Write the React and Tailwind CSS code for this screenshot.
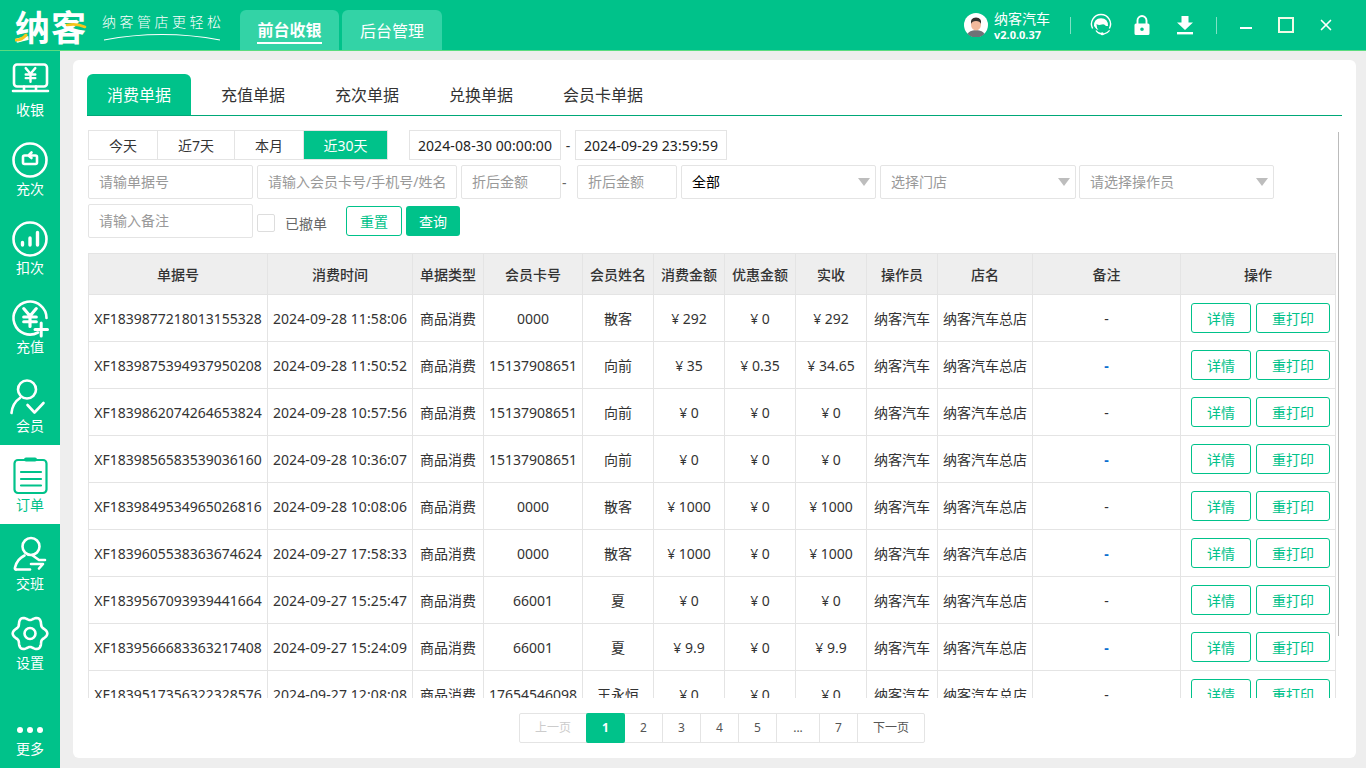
import React from "react";
import { X } from "lucide-react";

const FONT = "font-['Noto_Sans','Noto_Sans_CJK_SC',sans-serif]";

function Svg({ children, size = 44, view = "0 0 44 44", stroke = "#fff", sw = 2.6, className = "" }) {
  return (
    <svg width={size} height={size} viewBox={view} fill="none" stroke={stroke} strokeWidth={sw} strokeLinecap="round" strokeLinejoin="round" className={className}>
      {children}
    </svg>
  );
}

const Yen = ({ x, y, s = 1, stroke = "#fff", sw = 3 }) => (
  <g transform={`translate(${x} ${y}) scale(${s})`} stroke={stroke} strokeWidth={sw}>
    <path d="M-6 -8 L0 -1 L6 -8 M0 -1 V9 M-6 0 H6 M-6 4.5 H6" />
  </g>
);

function gearPath() {
  const pts = [];
  for (let i = 0; i < 120; i++) {
    const t = (i / 120) * Math.PI * 2;
    const r = 15.4 + 1.9 * Math.cos(6 * t);
    pts.push(`${(22 + r * Math.cos(t)).toFixed(2)} ${(23.5 + r * Math.sin(t)).toFixed(2)}`);
  }
  return "M" + pts.join("L") + "Z";
}

const IconPos = () => (
  <Svg>
    <rect x="6" y="7.5" width="33" height="22" rx="3" />
    <path d="M5 34 H40 M16 29.5 V34 M28 29.5 V34" />
    <Yen x={22.5} y={17.5} s={0.8} />
  </Svg>
);
const IconTimes = () => (
  <Svg>
    <circle cx="22" cy="24" r="16.5" />
    <path d="M19 19.5 H16.5 Q15 19.5 15 21 V26.5 Q15 28 16.5 28 H27.5 Q29 28 29 26.5 V21 Q29 19.5 27.5 19.5 H21" />
    <path d="M23.5 16.5 L20.5 19.5 L23.5 22" />
  </Svg>
);
const IconDeduct = () => (
  <Svg>
    <circle cx="22" cy="24" r="16.5" />
    <path d="M14.5 27.5 V30 M22 23 V30 M29.5 17.5 V30" strokeWidth="3.4" />
  </Svg>
);
const IconRecharge = () => (
  <Svg>
    <path d="M30 38.5 A16.5 16.5 0 1 1 38.5 24" />
    <Yen x={22} y={23} s={1.05} />
    <path d="M27 35.5 H39.5 M33.2 29 V42" strokeWidth="3" />
  </Svg>
);
const IconMember = () => (
  <Svg>
    <circle cx="19" cy="16.5" r="9" />
    <path d="M3.5 40 Q4.5 30 12 25" />
    <path d="M19.5 32 L26.5 39.5 L35.5 30" />
  </Svg>
);
const IconOrder = () => (
  <Svg stroke="#00c28a" sw={2.2}>
    <rect x="6.5" y="8" width="32" height="33" rx="3.5" />
    <path d="M13 20 H33 M13 27 H33 M13 33.5 H33" />
    <path d="M18 7.5 H27" strokeWidth="4" />
  </Svg>
);
const IconShift = () => (
  <Svg>
    <circle cx="23" cy="15.5" r="8.5" />
    <path d="M8 38.5 Q6.5 38.5 7 36.5 Q9 28 16.5 24.5" />
    <path d="M8 38.5 H22" />
    <path d="M24 24 L31 29 H37" />
    <path d="M23 33 H35 L31 37.5" />
  </Svg>
);
const IconGear = () => (
  <Svg>
    <path d={gearPath()} />
    <circle cx="22" cy="23.5" r="5.5" />
  </Svg>
);

const NAV = [
  ["收银", IconPos],
  ["充次", IconTimes],
  ["扣次", IconDeduct],
  ["充值", IconRecharge],
  ["会员", IconMember],
  ["订单", IconOrder, true],
  ["交班", IconShift],
  ["设置", IconGear],
];

function Sidebar() {
  return (
    <aside className="-mt-px flex w-[60px] shrink-0 flex-col bg-[#00c28a]">
      {NAV.map(([label, Icon, active]) => (
        <div key={label} className={`flex h-[79px] flex-col items-center pt-[7px] ${active ? "bg-white text-[#00c28a]" : "text-white"}`}>
          <div className="h-[44px] w-[44px]"><Icon /></div>
          <span className="text-[14px] leading-[18px]">{label}</span>
        </div>
      ))}
      <div className="mt-auto flex flex-col items-center pb-[10px] text-white">
        <div className="mb-[7px] flex gap-[4px]">
          <i className="h-[6px] w-[6px] rounded-full bg-white" />
          <i className="h-[6px] w-[6px] rounded-full bg-white" />
          <i className="h-[6px] w-[6px] rounded-full bg-white" />
        </div>
        <span className="text-[14px] leading-[18px]">更多</span>
      </div>
    </aside>
  );
}

function Logo() {
  return (
    <div className="relative flex h-[50px] w-[240px] shrink-0 items-center">
      <span className="relative ml-[15px] mt-[4px] text-[35px] font-bold leading-none tracking-[1px] text-white">
        纳客
        <svg className="absolute left-0 top-0" width="74" height="36" viewBox="0 0 74 36" fill="none">
          <path d="M1 30 Q7 30 11 25" stroke="#f6c51b" strokeWidth="3" strokeLinecap="round" />
          <path d="M52 15 Q62 13 70 17" stroke="#f6c51b" strokeWidth="2.6" strokeLinecap="round" />
        </svg>
      </span>
      <div className="relative ml-[15px] -mt-[6px]">
        <span className="block whitespace-nowrap text-[14px] font-light leading-[20px] tracking-[3.5px] text-white">纳客管店更轻松</span>
        <svg className="absolute left-0 top-[20px]" width="122" height="10" viewBox="0 0 122 10" fill="none">
          <path d="M2 8 Q60 -3 118 8" stroke="#fff" strokeWidth="1.2" />
        </svg>
      </div>
    </div>
  );
}

function Avatar() {
  return (
    <svg width="24" height="24" viewBox="0 0 24 24">
      <circle cx="12" cy="12" r="12" fill="#fff" />
      <path d="M3.5 21 Q5 17.5 12 17 Q19 17.5 20.5 21 A12 12 0 0 1 3.5 21Z" fill="#6f7277" />
      <ellipse cx="12" cy="11.5" rx="5" ry="6" fill="#f2b99c" />
      <path d="M7 11 Q6 4.5 12 4.5 Q18 4.5 17 11 Q16 8 12 8 Q8 8 7 11Z" fill="#33302e" />
    </svg>
  );
}

function HeadsetIcon() {
  return (
    <svg className="ml-[18px]" width="24" height="24" viewBox="0 0 24 24" fill="none">
      <path d="M3.6 15.5 A9.5 9.5 0 1 1 20.4 15.5" stroke="#fff" strokeWidth="1.4" />
      <path d="M5 13 Q4.8 5.5 12 5.3 Q19.2 5.5 19 13 L17 13 Q15 10.5 13 11.5 Q9.5 12.5 7.5 11 Q7.5 15 9.5 17 Q7 16.5 5 13Z" fill="#fff" />
      <path d="M7 17.5 Q9 20.8 12.5 20.8" stroke="#fff" strokeWidth="1.4" />
      <path d="M14 21.4 Q18.5 20.5 20.6 17.4" stroke="#fff" strokeWidth="1.2" />
      <circle cx="13.2" cy="20.8" r="1.5" fill="#fff" />
    </svg>
  );
}

function LockIcon() {
  return (
    <svg className="ml-[21px]" width="16" height="20" viewBox="0 0 16 20" fill="none">
      <path d="M3.5 9.5 V5.5 A4.5 4.5 0 0 1 12.5 5.5 V9.5" stroke="#fff" strokeWidth="1.9" />
      <path fillRule="evenodd" clipRule="evenodd" d="M2 8.5 H14 Q15.5 8.5 15.5 10 V18.5 Q15.5 20 14 20 H2 Q0.5 20 0.5 18.5 V10 Q0.5 8.5 2 8.5Z M8 12.5 A1.8 1.8 0 1 0 8 16.1 A1.8 1.8 0 1 0 8 12.5Z" fill="#fff" />
    </svg>
  );
}

function TopBar() {
  return (
    <header className="relative z-10 flex h-[51px] shrink-0 border-b border-[#5cdc80] bg-[#00c28a] text-white">
      <Logo />
      <div className="flex items-end gap-[3px]">
        <div className="flex h-[40px] w-[99px] items-center justify-center rounded-t-[6px] bg-[#33d3a6] pt-[2px]">
          <span className="border-b-2 border-white text-[16px] font-bold leading-[23px]">前台收银</span>
        </div>
        <div className="flex h-[40px] w-[100px] items-center justify-center rounded-t-[6px] bg-[#33d3a6] pt-[2px]">
          <span className="text-[16px] leading-[23px]">后台管理</span>
        </div>
      </div>
      <div className="ml-auto flex items-center">
        <Avatar />
        <div className="ml-[6px] flex w-[76px] flex-col">
          <span className="text-[14px] leading-[17px]">纳客汽车</span>
          <span className="mt-[1px] text-[11px] font-bold leading-[13px]">v2.0.0.37</span>
        </div>
        <i className="h-[17px] w-px bg-white/50" />
        <HeadsetIcon />
        <LockIcon />
        <svg className="ml-[26px]" width="18" height="20" viewBox="0 0 18 20" fill="#fff">
          <path d="M5.5 1 H12.5 V7.5 H17 L9 15 L1 7.5 H5.5Z" />
          <rect x="1" y="17" width="16" height="2.4" />
        </svg>
        <i className="ml-[22px] h-[17px] w-px bg-white/50" />
        <i className="ml-[23px] mt-[6px] h-[2px] w-[12px] bg-white" />
        <i className="ml-[26px] h-[16px] w-[16px] border-2 border-[#f0fbe6]" />
        <X className="ml-[23px] mr-[31px]" size={18} strokeWidth={2.2} />
      </div>
    </header>
  );
}

const TABS = ["消费单据", "充值单据", "充次单据", "兑换单据", "会员卡单据"];
function Tabs() {
  return (
    <div className="flex h-[42px] shrink-0 border-b border-[#00a878] text-[16px]">
      {TABS.map((t, i) =>
        i === 0 ? (
          <div key={t} className="mr-[5px] flex w-[104px] items-center justify-center rounded-t-[6px] bg-[#00c28a] text-white">{t}</div>
        ) : (
          <div key={t} className="flex items-center px-[25px] text-[#333]">{t}</div>
        )
      )}
    </div>
  );
}

const inputCls = "flex h-[34px] items-center rounded-[2px] border border-[#e4e4e4] px-[10px] pb-[2px] text-[14px] text-[#999] whitespace-nowrap overflow-hidden";

function Sel({ w, children, muted = true }) {
  return (
    <div className={`${inputCls} ${w} justify-between ${muted ? "" : "!text-black"}`}>
      <span>{children}</span>
      <i className="-mr-[5px] mt-[2px] h-0 w-0 border-x-[6px] border-t-[8px] border-x-transparent border-t-[#bdbdbd]" />
    </div>
  );
}

function Filters() {
  const qs = [["今天", "w-[69px]"], ["近7天", "w-[77px]"], ["本月", "w-[69px]"]];
  return (
    <div className="flex flex-col">
      <div className="flex h-[30px] items-center text-[14px] text-[#333]">
        <div className="flex h-[30px] border border-[#e4e4e4]">
          {qs.map(([t, w]) => (
            <div key={t} className={`flex items-center justify-center border-r border-[#e4e4e4] ${w}`}>{t}</div>
          ))}
          <div className="flex w-[83px] items-center justify-center bg-[#00c28a] text-white">近30天</div>
        </div>
        <div className="ml-[21px] flex h-[30px] w-[152px] items-center justify-center border border-[#e4e4e4] tracking-[0.1px] text-[#222]">2024-08-30 00:00:00</div>
        <span className="w-[14px] text-center">-</span>
        <div className="flex h-[30px] w-[152px] items-center justify-center border border-[#e4e4e4] tracking-[0.1px] text-[#222]">2024-09-29 23:59:59</div>
      </div>
      <div className="mt-[5px] flex items-center">
        <div className={`${inputCls} w-[165px]`}>请输单据号</div>
        <div className={`${inputCls} ml-[4px] w-[200px]`}>请输入会员卡号/手机号/姓名</div>
        <div className={`${inputCls} ml-[4px] w-[100px]`}>折后金额</div>
        <span className="w-[16px] text-[14px] text-[#666]"><span className="ml-[1px]">-</span></span>
        <div className={`${inputCls} w-[100px]`}>折后金额</div>
        <div className="ml-[4px]"><Sel w="w-[195px]" muted={false}>全部</Sel></div>
        <div className="ml-[4px]"><Sel w="w-[196px]">选择门店</Sel></div>
        <div className="ml-[3px]"><Sel w="w-[195px]">请选择操作员</Sel></div>
      </div>
      <div className="mt-[5px] flex items-center">
        <div className={`${inputCls} w-[165px]`}>请输入备注</div>
        <i className="ml-[4px] mt-[4px] h-[18px] w-[18px] rounded-[2px] border border-[#ddd]" />
        <span className="ml-[10px] mt-[4px] text-[14px] text-[#666]">已撤单</span>
        <button className="ml-[19px] h-[30px] w-[56px] rounded-[3px] border border-[#00c28a] text-[14px] text-[#00c28a]">重置</button>
        <button className="ml-[4px] h-[30px] w-[54px] rounded-[3px] bg-[#00c28a] text-[14px] text-white">查询</button>
      </div>
    </div>
  );
}

const WIDTHS = [179, 145, 71, 99, 71, 71, 71, 71, 71, 95, 148, 155];
const HEAD = ["单据号", "消费时间", "单据类型", "会员卡号", "会员姓名", "消费金额", "优惠金额", "实收", "操作员", "店名", "备注", "操作"];
const ROWS = [
  ["XF1839877218013155328", "2024-09-28 11:58:06", "0000", "散客", "¥ 292", "¥ 0", "¥ 292"],
  ["XF1839875394937950208", "2024-09-28 11:50:52", "15137908651", "向前", "¥ 35", "¥ 0.35", "¥ 34.65"],
  ["XF1839862074264653824", "2024-09-28 10:57:56", "15137908651", "向前", "¥ 0", "¥ 0", "¥ 0"],
  ["XF1839856583539036160", "2024-09-28 10:36:07", "15137908651", "向前", "¥ 0", "¥ 0", "¥ 0"],
  ["XF1839849534965026816", "2024-09-28 10:08:06", "0000", "散客", "¥ 1000", "¥ 0", "¥ 1000"],
  ["XF1839605538363674624", "2024-09-27 17:58:33", "0000", "散客", "¥ 1000", "¥ 0", "¥ 1000"],
  ["XF1839567093939441664", "2024-09-27 15:25:47", "66001", "夏", "¥ 0", "¥ 0", "¥ 0"],
  ["XF1839566683363217408", "2024-09-27 15:24:09", "66001", "夏", "¥ 9.9", "¥ 0", "¥ 9.9"],
  ["XF1839517356322328576", "2024-09-27 12:08:08", "17654546098", "王永恒", "¥ 0", "¥ 0", "¥ 0"],
];

function Table() {
  const td = "border border-[#e4e4e4] p-0 text-center whitespace-nowrap overflow-hidden";
  return (
    <div className="mt-[15px] h-[445px] overflow-hidden">
      <table className="w-[1247px] table-fixed border-collapse text-[14px] text-[#333]">
        <colgroup>{WIDTHS.map((w, i) => <col key={i} style={{ width: w }} />)}</colgroup>
        <thead>
          <tr className="h-[41px] bg-[#eeeeee]">
            {HEAD.map((h) => <th key={h} className={`${td} font-medium`}>{h}</th>)}
          </tr>
        </thead>
        <tbody>
          {ROWS.map((r, i) => (
            <tr key={r[0]} className="h-[47px]">
              <td className={td}>{r[0]}</td>
              <td className={`${td} tracking-[0.1px]`}>{r[1]}</td>
              <td className={td}>商品消费</td>
              <td className={td}>{r[2]}</td>
              <td className={td}>{r[3]}</td>
              <td className={td}>{r[4]}</td>
              <td className={td}>{r[5]}</td>
              <td className={td}>{r[6]}</td>
              <td className={td}>纳客汽车</td>
              <td className={td}>纳客汽车总店</td>
              <td className={`${td} ${i % 2 ? "font-bold text-[#0a6fd0]" : ""}`}>-</td>
              <td className={td}>
                <div className="flex justify-center gap-[5px] pl-[5px]">
                  <button className="h-[30px] w-[60px] rounded-[3px] border border-[#00c28a] text-[#00c28a]">详情</button>
                  <button className="h-[30px] w-[74px] rounded-[3px] border border-[#00c28a] text-[#00c28a]">重打印</button>
                </div>
              </td>
            </tr>
          ))}
        </tbody>
      </table>
    </div>
  );
}

function Pager() {
  const items = [["1", "w-[39px]"], ["2", "w-[38px]"], ["3", "w-[38px]"], ["4", "w-[38px]"], ["5", "w-[38px]"], ["...", "w-[43px]"], ["7", "w-[38px]"], ["下一页", "w-[66px]"]];
  return (
    <div className="ml-[432px] mt-[15px] flex">
      <div className="flex h-[30px] rounded-[2px] border border-[#e4e4e4] text-[12px] text-[#555]">
        <div className="flex w-[66px] items-center justify-center text-[#ccc]">上一页</div>
        {items.map(([t, w], i) => (
          <div key={t} className={`flex items-center justify-center ${w} ${i === 0 ? "-my-px rounded-[2px] bg-[#00c28a] font-bold text-white" : "border-r border-[#e4e4e4] last:border-r-0"}`}>{t}</div>
        ))}
      </div>
    </div>
  );
}

export default function App() {
  return (
    <div className={`flex h-[768px] w-[1366px] flex-col overflow-hidden bg-[#eeeeee] ${FONT}`}>
      <TopBar />
      <div className="flex min-h-0 flex-1">
        <Sidebar />
        <main className="mb-[10px] ml-[13px] mr-[10px] mt-[9px] flex flex-1 flex-col rounded-[6px] bg-white pl-[14px] pr-[14px] pt-[14px]">
          <Tabs />
          <div className="relative mt-[14px] w-[1252px] pl-[1px]">
            <Filters />
            <Table />
            <i className="absolute left-[1251px] top-[2px] h-[504px] w-px bg-[#bbbbbb]" />
          </div>
          <Pager />
        </main>
      </div>
    </div>
  );
}
